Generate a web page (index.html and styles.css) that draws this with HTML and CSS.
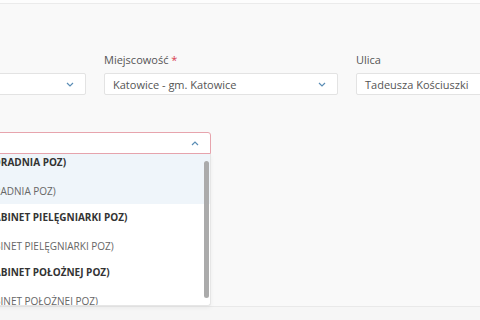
FILE: index.html
```html
<!DOCTYPE html>
<html lang="pl">
<head>
    <meta charset="UTF-8">
    <meta name="viewport" content="width=device-width, initial-scale=1.0">
    <title>Wybór placówki</title>
    <link rel="stylesheet" href="styles.css">
</head>
<body>
    <div class="topbar"></div>
    <div class="page">
        <form class="form">
            <div class="row row-3">
                <div class="field">
                    <label>Województwo</label>
                    <div class="input select">
                        <span>śląskie</span>
                        <svg class="chevron" width="8" height="5" viewBox="0 0 8 5"><path d="M1 1l3 3 3-3" /></svg>
                    </div>
                </div>
                <div class="field">
                    <label>Miejscowość <span class="req">*</span></label>
                    <div class="input select">
                        <span>Katowice - gm. Katowice</span>
                        <svg class="chevron" width="8" height="5" viewBox="0 0 8 5"><path d="M1 1l3 3 3-3" /></svg>
                    </div>
                </div>
                <div class="field">
                    <label>Ulica</label>
                    <div class="input">
                        <span>Tadeusza Kościuszki</span>
                    </div>
                </div>
            </div>
            <div class="row row-2">
                <div class="field">
                    <label>Placówka</label>
                    <div class="input select open">
                        <span></span>
                        <svg class="chevron" width="8" height="5" viewBox="0 0 8 5"><path d="M1 4l3-3 3 3" /></svg>
                    </div>
                    <div class="options">
                        <div class="option active">
                            <div class="opt-name">PRZYCHODNIA ZDROWIE (PORADNIA POZ)</div>
                            <div class="opt-desc">Przychodnia Zdrowie (PORADNIA POZ)</div>
                        </div>
                        <div class="option">
                            <div class="opt-name">PRZYCHODNIA ZDROWIE (GABINET PIELĘGNIARKI POZ)</div>
                            <div class="opt-desc">Przychodnia Zdrowie (GABINET PIELĘGNIARKI POZ)</div>
                        </div>
                        <div class="option">
                            <div class="opt-name">PRZYCHODNIA ZDROWIE (GABINET POŁOŻNEJ POZ)</div>
                            <div class="opt-desc">Przychodnia Zdrowie (GABINET POŁOŻNEJ POZ)</div>
                        </div>
                        <div class="scroll-thumb"></div>
                    </div>
                </div>
            </div>
        </form>
    </div>
    <div class="footer"></div>
</body>
</html>
```

FILE: styles.css
```css
body {
    margin: 0;
    font-family: "Open Sans", "DejaVu Sans", sans-serif;
    font-size: 11px;
    color: #555;
    background-color: #f9f9f9;
    overflow: hidden;
}
.topbar {
    height: 3px;
    background-color: #fdfdfd;
    border-bottom: 1px solid #ebebeb;
}
.page {
    padding-top: 49px;
}
.form {
    margin-left: -148px;
    width: 740px;
}
.row {
    display: grid;
    column-gap: 18px;
}
.row-3 {
    grid-template-columns: 234px 234px 234px;
}
.row-2 {
    grid-template-columns: 359px;
    margin-top: 17px;
}
.field label {
    display: block;
    line-height: 14px;
    margin-bottom: 6px;
    color: #555;
}
.req {
    color: #d8404f;
}
.input {
    position: relative;
    display: flex;
    align-items: center;
    height: 22px;
    box-sizing: border-box;
    padding: 0 8px;
    background-color: #fff;
    border: 1px solid #e3e3e3;
    border-radius: 2px;
    color: #555;
}
.chevron {
    margin-left: auto;
    margin-right: 3px;
    fill: none;
    stroke: #5a8db5;
    stroke-width: 1.2;
}
.input.open {
    border-color: #e7a4ad;
    border-radius: 3px 3px 0 0;
}
.options {
    position: relative;
    height: 152px;
    box-sizing: border-box;
    overflow: hidden;
    background-color: #fff;
    border: 1px solid #e6e6e6;
    border-top: none;
    border-radius: 0 0 3px 3px;
    box-shadow: 0 2px 4px rgba(0, 0, 0, 0.05);
}
.option {
    padding: 6px 6px;
}
.option:first-child {
    padding-top: 1px;
}
.option.active {
    background-color: #eff5fa;
}
.opt-name {
    line-height: 14px;
    font-weight: bold;
    font-size: 10px;
    color: #333;
    white-space: nowrap;
}
.opt-desc {
    line-height: 14px;
    margin-top: 15px;
    font-size: 10px;
    color: #666;
    text-transform: uppercase;
    white-space: nowrap;
}
.scroll-thumb {
    position: absolute;
    right: 1px;
    top: 7px;
    width: 5px;
    height: 137px;
    border-radius: 3px;
    background-color: #ababab;
}
.footer {
    height: 20px;
    background-color: #f6f6f6;
    border-top: 1px solid #e9e9e9;
}
```
